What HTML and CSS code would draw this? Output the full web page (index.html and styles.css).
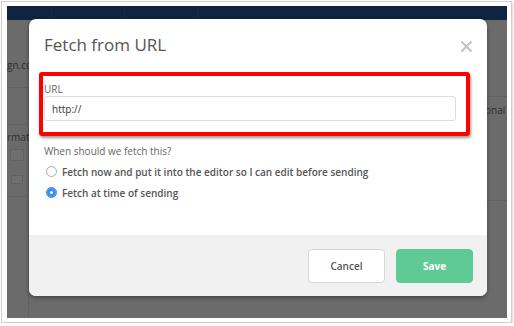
FILE: index.html
```html
<!DOCTYPE html>
<html>
  <head>
    <meta charset="UTF-8">
    <link rel="stylesheet" href="styles.css">
  </head>
  <body>
    <div class="frame">
      <div class="screen">
        <div class="topbar">
          <span class="tab"></span>
          <span class="tab"></span>
          <span class="tab"></span>
        </div>
        <div class="page">
          <div class="page-left">
            <span class="bg-text t1">gn.co</span>
            <span class="bg-line l1"></span>
            <span class="bg-line l2"></span>
            <span class="bg-text t2">rmat</span>
            <span class="bg-box b1"></span>
            <span class="bg-box b2"></span>
            <span class="bg-line l3"></span>
          </div>
          <div class="page-right">
            <span class="bg-line r1"></span>
            <span class="bg-text t3">onal</span>
            <span class="bg-line r2"></span>
          </div>
        </div>

        <div class="modal">
          <div class="modal-head">
            <h3>Fetch from URL</h3>
            <svg class="close" width="13" height="13" viewBox="0 0 13 13">
              <path d="M1.5 1.5L11.5 11.5M11.5 1.5L1.5 11.5" stroke="#c4c4c4" stroke-width="2.2" fill="none" />
            </svg>
          </div>
          <div class="modal-body">
            <label class="field-label" for="url">URL</label>
            <input id="url" class="url-input" value="http://" />
            <p class="question">When should we fetch this?</p>
            <label class="radio">
              <input type="radio" name="when" />
              <span class="radio-mark"></span>
              <span>Fetch now and put it into the editor so I can edit before sending</span>
            </label>
            <label class="radio">
              <input type="radio" name="when" checked />
              <span class="radio-mark"></span>
              <span>Fetch at time of sending</span>
            </label>
          </div>
          <div class="modal-foot">
            <button class="btn btn-default">Cancel</button>
            <button class="btn btn-save">Save</button>
          </div>
        </div>

        <!-- annotation drawn over the screenshot -->
        <div class="highlight"></div>
      </div>
    </div>
  </body>
</html>
```

FILE: styles.css
```css
html, body {
  margin: 0;
  padding: 0;
  background: #fff;
  font-family: "Open Sans", "Liberation Sans", Arial, sans-serif;
}
* {
  box-sizing: border-box;
}
.frame {
  width: 511px;
  height: 322px;
  margin: 1px 0 0 1px;
  padding: 4px 3px 4px 5px;
  border: 1px solid #cfcfcf;
  box-shadow: 1px 1px 2px rgba(0, 0, 0, .15);
  background: #fff;
}
.screen {
  position: relative;
  width: 500px;
  height: 312px;
  overflow: hidden;
  background: #6b6b6b;
}
.topbar {
  display: flex;
  height: 14px;
  background: #0f2441;
}
.tab {
  width: 73px;
  border-right: 1px solid #15294a;
}
.tab:first-child {
  width: 45px;
}
.page {
  display: flex;
  justify-content: space-between;
  height: 298px;
}
.page-left, .page-right {
  position: relative;
  width: 22px;
}
.page-left {
  border-right: 1px solid #626262;
}
.bg-text {
  position: absolute;
  font-size: 10px;
  color: #2e2e2e;
  white-space: nowrap;
}
.bg-line {
  position: absolute;
  left: 0;
  right: 0;
  height: 1px;
  background: #616161;
}
.t1 { top: 38px; left: 0; }
.l1 { top: 67px; }
.l2 { top: 104px; }
.t2 { top: 110px; left: 0; }
.bg-box {
  position: absolute;
  border: 1px solid #626262;
  background: #6f6f6f;
}
.b1 { top: 129px; left: 3px; width: 14px; height: 12px; }
.b2 { top: 155px; left: 4px; width: 12px; height: 9px; }
.l3 { top: 176px; }
.r1 { top: 76px; }
.t3 { top: 83px; left: 0; }
.r2 { top: 180px; }

.modal {
  position: absolute;
  left: 22px;
  top: 13px;
  width: 458px;
  height: 277px;
  background: #fff;
  border-radius: 7px;
  box-shadow: 0 2px 4px rgba(0, 0, 0, .35);
  display: flex;
  flex-direction: column;
  overflow: hidden;
}
.modal-head {
  display: flex;
  justify-content: space-between;
  height: 63px;
  padding: 14px 14px 0 15px;
}
.modal-head h3 {
  margin: 0;
  font-size: 17px;
  font-weight: 400;
  color: #555;
  line-height: 24px;
}
.close {
  margin-top: 7px;
}
.modal-body {
  flex: 1;
  padding: 0 31px 0 15px;
}
.field-label {
  display: block;
  font-size: 10px;
  color: #666;
  line-height: 14px;
}
.url-input {
  display: block;
  width: 100%;
  height: 25px;
  border: 1px solid #dcdcdc;
  border-radius: 3px;
  padding: 0 7px;
  font-family: inherit;
  font-size: 10px;
  color: #333;
}
.question {
  margin: 22px 0 2px;
  font-size: 10px;
  color: #666;
  line-height: 16px;
}
.radio {
  display: flex;
  align-items: center;
  gap: 5px;
  height: 21px;
  font-size: 10px;
  font-weight: 600;
  color: #555;
  padding-left: 2px;
}
.radio input {
  display: none;
}
.radio-mark {
  width: 11px;
  height: 11px;
  border: 1px solid #aaa;
  border-radius: 50%;
  background: #fff;
}
.radio input:checked + .radio-mark {
  border-color: #3d8ff1;
  background: #3d8ff1;
  box-shadow: inset 0 0 0 3px #3d8ff1, inset 0 0 0 5px #fff;
}
.modal-foot {
  display: flex;
  justify-content: flex-end;
  gap: 11px;
  height: 61px;
  padding: 14px 14px 0;
  background: #f1f1f1;
}
.btn {
  width: 77px;
  height: 34px;
  border: 1px solid #d8d8d8;
  border-radius: 4px;
  font-family: inherit;
  font-size: 10px;
  font-weight: 600;
  color: #555;
  background: #fff;
}
.btn-save {
  border-color: #5fca95;
  background: #5fca95;
  color: #fff;
  font-weight: 700;
}
.highlight {
  position: absolute;
  left: 32px;
  top: 66px;
  width: 431px;
  height: 64px;
  border: 4px solid #f00;
  border-radius: 3px;
  box-shadow: 1px 2px 3px rgba(0, 0, 0, .4);
}
```
